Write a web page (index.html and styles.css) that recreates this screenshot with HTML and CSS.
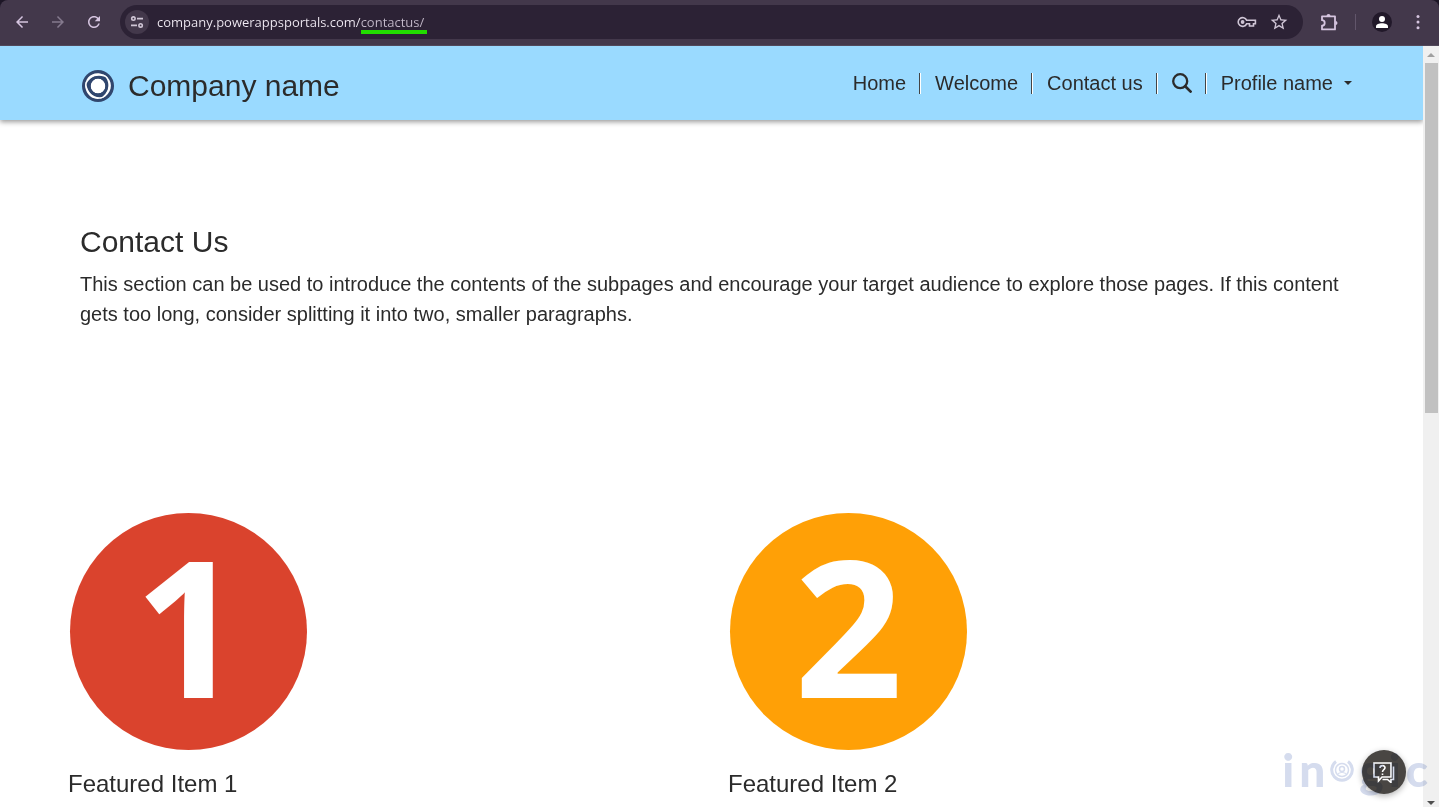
FILE: index.html
```html
<!DOCTYPE html>
<html lang="en">
<head>
<meta charset="utf-8">
<meta name="viewport" content="width=device-width, initial-scale=1">
<title>Contact Us</title>
<link rel="stylesheet" href="styles.css">
</head>
<body>
<div class="toolbar">
  <div class="toolbar-nav">
    <button class="tool" aria-label="Back"><svg class="glyph" viewBox="0 0 24 24"><path d="M20 11H7.8l5.6-5.6L12 4l-8 8 8 8 1.4-1.4L7.8 13H20z"/></svg></button>
    <button class="tool tool-off" aria-label="Forward"><svg class="glyph" viewBox="0 0 24 24"><path d="M4 11h12.2l-5.6-5.6L12 4l8 8-8 8-1.4-1.4 5.6-5.6H4z"/></svg></button>
    <button class="tool" aria-label="Reload"><svg class="glyph" viewBox="0 0 24 24"><path d="M17.65 6.35C16.2 4.9 14.21 4 12 4c-4.42 0-7.99 3.58-7.99 8s3.57 8 7.99 8c3.73 0 6.84-2.55 7.73-6h-2.08c-.82 2.33-3.04 4-5.65 4-3.31 0-6-2.69-6-6s2.69-6 6-6c1.66 0 3.14.69 4.22 1.78L13 11h7V4l-2.35 2.35z"/></svg></button>
  </div>
  <div class="address">
    <button class="site-info" aria-label="Site information"><svg width="14" height="14" viewBox="0 0 14 14" fill="none" stroke="currentColor" stroke-width="1.6"><circle cx="3.4" cy="3.6" r="1.7"/><path d="M7 3.6h6M1 10.4h6"/><circle cx="10.6" cy="10.4" r="1.7"/></svg></button>
    <div class="url-box">
      <input class="url" type="text" aria-label="Address" value="company.powerappsportals.com/contactus/">
      <span class="url-mark"></span>
    </div>
    <button class="tool" aria-label="Passwords"><svg width="20" height="12" viewBox="0 0 20 12" fill="none" stroke="currentColor" stroke-width="1.6"><path d="M9.6 4.2A4.4 4.4 0 1 0 9.6 7.8H12.500V10H16.500V7.800H18.400V4.200Z"/><circle cx="5.6" cy="6" r="1.1" fill="currentColor"/></svg></button>
    <button class="tool" aria-label="Bookmark"><svg width="20" height="20" fill="currentColor" viewBox="0 0 24 24"><path d="M22 9.24l-7.19-.62L12 2 9.19 8.63 2 9.24l5.46 4.73L5.82 21 12 17.27 18.18 21l-1.63-7.03L22 9.24zM12 15.4l-3.76 2.27 1-4.28-3.32-2.88 4.38-.38L12 6.1l1.71 4.04 4.38.38-3.32 2.88 1 4.28L12 15.4z"/></svg></button>
  </div>
  <div class="toolbar-end">
    <button class="tool" aria-label="Extensions"><svg width="18" height="18" viewBox="0 0 18 18"><path fill="none" stroke="currentColor" stroke-width="1.8" stroke-linejoin="round" d="M2 3.4H15V16.400H2V12.600A2.7 2.7 0 0 0 2 7.200Z"/><path fill="currentColor" d="M6.500 3a2 2 0 0 1 4 0zM15.500 7.900a2 2 0 0 1 0 4z"/></svg></button>
    <span class="toolbar-rule"></span>
    <button class="avatar" aria-label="Profile"><svg width="16" height="16" viewBox="0 0 16 16" fill="currentColor"><circle cx="8" cy="5" r="3"/><path d="M2 14v-1.500C2 10.200 5 9.200 8 9.200s6 1 6 3.300V14z"/></svg></button>
    <button class="tool" aria-label="Menu"><svg class="glyph" viewBox="0 0 24 24"><circle cx="12" cy="4.500" r="2"/><circle cx="12" cy="12" r="2"/><circle cx="12" cy="19.500" r="2"/></svg></button>
  </div>
</div>
<div class="viewport">
  <div class="page">
    <header class="site-header">
      <a class="brand" href="#">
        <svg width="32" height="32" viewBox="0 0 32 32"><circle cx="16" cy="16" r="16" fill="#30466e"/><circle cx="16" cy="16" r="7.400" fill="#fff"/><g fill="#fff"><path d="M3.500 18C2 9 9 2 18 3.500C22 4 25 6 26.500 8.500C17 2.500 5 6 3.500 18Z"/><path d="M3.500 18C2 9 9 2 18 3.500C22 4 25 6 26.500 8.500C17 2.500 5 6 3.500 18Z" transform="rotate(120 16 16)"/><path d="M3.500 18C2 9 9 2 18 3.500C22 4 25 6 26.500 8.500C17 2.500 5 6 3.500 18Z" transform="rotate(240 16 16)"/></g><circle cx="16" cy="16" r="8.800" fill="none" stroke="#30466e" stroke-width="2.600"/></svg>
        <span>Company name</span>
      </a>
      <nav class="site-nav">
        <a href="#">Home</a>
        <a href="#">Welcome</a>
        <a href="#">Contact us</a>
        <a href="#" aria-label="Search"><svg width="20" height="20" viewBox="0 0 20 20" fill="none" stroke="currentColor"><circle cx="8.200" cy="8.200" r="7" stroke-width="2.300"/><path d="M13.200 13.200L18.600 18.600" stroke-width="2.700" stroke-linecap="round"/></svg></a>
        <button>Profile name<span class="caret"></span></button>
      </nav>
    </header>
    <main>
      <section class="intro">
        <h1>Contact Us</h1>
        <p>This section can be used to introduce the contents of the subpages and encourage your target audience to explore those pages. If this content gets too long, consider splitting it into two, smaller paragraphs.</p>
      </section>
      <section class="features">
        <article><div class="badge badge-red">1</div><h2>Featured Item 1</h2></article>
        <article><div class="badge badge-orange">2</div><h2>Featured Item 2</h2></article>
      </section>
    </main>
  </div>
  <div class="scrollbar"><span class="arrow-up"></span><span class="thumb"></span><span class="arrow-down"></span></div>
  <button class="help" aria-label="Help chat"><svg width="22" height="22" viewBox="0 0 22 22" fill="none" stroke="#fff" stroke-width="1.600"><path d="M1 2H18V16H9L5.500 20V16H1Z"/><path d="M20.500 5.500V18.500H18V21.500L14.500 18.500H9.500"/><path d="M7 7C7 3.900 12 3.900 12 6.800C12 8.800 9.500 8.600 9.500 11M9.500 12.500V14"/></svg></button>
  <div class="watermark"><span>i</span><span>n</span><svg width="24" height="24" viewBox="0 0 24 24" fill="none" stroke="currentColor"><path d="M6 3.500A10.300 10.300 0 1 0 18 3.500" stroke-width="3"/><circle cx="12" cy="12" r="6.500" stroke-width="1.500"/><circle cx="12" cy="11" r="2.500" stroke-width="1.500"/><path d="M8 15.500Q12 13 16 15.500"/></svg><span>g</span><span>i</span><span>c</span></div>
</div>
</body>
</html>
```
FILE: styles.css
```css
* { box-sizing: border-box; }
body {
  margin: 0;
  height: 100vh;
  display: flex;
  flex-direction: column;
  overflow: hidden;
  background: #1d1626;
  color: #2b2b2b;
  font: 20px/30px "Liberation Sans", Arial, sans-serif;
}
button { border: 0; padding: 0; background: none; color: inherit; font: inherit; }
a { color: inherit; text-decoration: none; }
h1, h2, p { margin: 0; font-weight: 400; }
svg { display: block; flex: none; }

.toolbar {
  flex: none;
  height: 46px;
  display: flex;
  align-items: center;
  gap: 12px;
  padding: 0 7px 2px 8px;
  background: #43384b;
  border-bottom: 1px solid #51485a;
  border-radius: 8px 8px 0 0;
  color: #d6c5e0;
}
.toolbar-nav { display: flex; gap: 8px; }
.tool { width: 28px; height: 28px; display: grid; place-items: center; }
.tool-off { color: #857a8e; }
.glyph { width: 18px; height: 18px; fill: currentColor; }
.address {
  flex: 1;
  height: 34px;
  display: flex;
  align-items: center;
  gap: 4px;
  padding: 0 10px 0 5px;
  border-radius: 17px;
  background: #2c2235;
  color: #cfc5d5;
}
.site-info {
  width: 24px;
  height: 24px;
  display: grid;
  place-items: center;
  border-radius: 50%;
  background: #43384b;
}
.url-box { flex: 1; position: relative; margin-left: 4px; }
.url {
  display: block;
  width: 100%;
  height: 24px;
  padding: 0;
  border: 0;
  outline: 0;
  font: 13px/20px "Open Sans", "Noto Sans", sans-serif;
  color: transparent;
  background: linear-gradient(90deg, #f2ecf5 204px, #c3b9c9 204px) text;
}
.url-mark { position: absolute; left: 204px; top: 20px; width: 66px; height: 4px; background: #22dc00; }
.toolbar-end { display: flex; align-items: center; gap: 12px; }
.toolbar-rule { width: 1px; height: 16px; background: #62566b; }
.avatar {
  width: 20px;
  height: 20px;
  margin-left: 4px;
  display: grid;
  place-items: center;
  border-radius: 50%;
  background: #211829;
  color: #fff;
}

.viewport { flex: 1; min-height: 0; position: relative; display: grid; grid-template-columns: 1fr 16px; background: #fff; }
.page { overflow: hidden; }
.site-header {
  display: flex;
  justify-content: space-between;
  align-items: flex-start;
  height: 74px;
  padding: 22px 71px 0 82px;
  background: #9adaff;
  box-shadow: 0 2px 5px rgba(0, 0, 0, .4);
}
.brand { display: flex; align-items: center; gap: 14px; font-size: 30px; line-height: 36px; }
.site-nav { display: flex; align-items: center; }
.site-nav > * { display: flex; align-items: center; }
.site-nav > :not(:last-child)::after {
  content: "";
  width: 2px;
  height: 21px;
  margin: 0 14px 0 13px;
  background: linear-gradient(90deg, #444 1px, #fff 1px);
}
.caret { margin-left: 11px; border: 4px solid transparent; border-top-color: #2b2b2b; border-bottom: 0; }

.intro { padding: 106px 80px 0; }
.intro h1 { font-size: 30px; line-height: 32px; margin-bottom: 11px; }
.features { display: grid; grid-template-columns: 1fr 1fr; padding: 184px 35px 0 68px; }
.badge {
  width: 237px;
  height: 237px;
  margin: 0 0 19px 2px;
  border-radius: 50%;
  color: #fff;
  text-align: center;
  font: 700 190px/224px "Open Sans", "Noto Sans", sans-serif;
}
.badge-red { background: #da432d; }
.badge-orange { background: #ffa006; }
.features h2 { font-size: 24px; line-height: 30px; }

.scrollbar { display: flex; flex-direction: column; align-items: center; padding: 7px 0 2px; background: #f0f0f0; }
.arrow-up { border: 4px solid transparent; border-bottom-color: #a0a0a0; border-top: 0; }
.thumb { width: 13px; height: 46.5%; margin-top: 6px; background: #c1c1c1; }
.arrow-down { margin-top: auto; border: 4px solid transparent; border-top-color: #505050; border-bottom: 0; }
.help {
  position: absolute;
  right: 33px;
  bottom: 13px;
  width: 44px;
  height: 44px;
  display: grid;
  place-items: center;
  border-radius: 50%;
  background: #494643;
  box-shadow: 0 2px 6px rgba(0, 0, 0, .3);
}
.watermark {
  position: absolute;
  right: 11px;
  bottom: 15px;
  display: flex;
  align-items: center;
  gap: 5px;
  color: #d5dcee;
  mix-blend-mode: multiply;
  pointer-events: none;
  font: 900 46px/44px Lato, sans-serif;
}
```
